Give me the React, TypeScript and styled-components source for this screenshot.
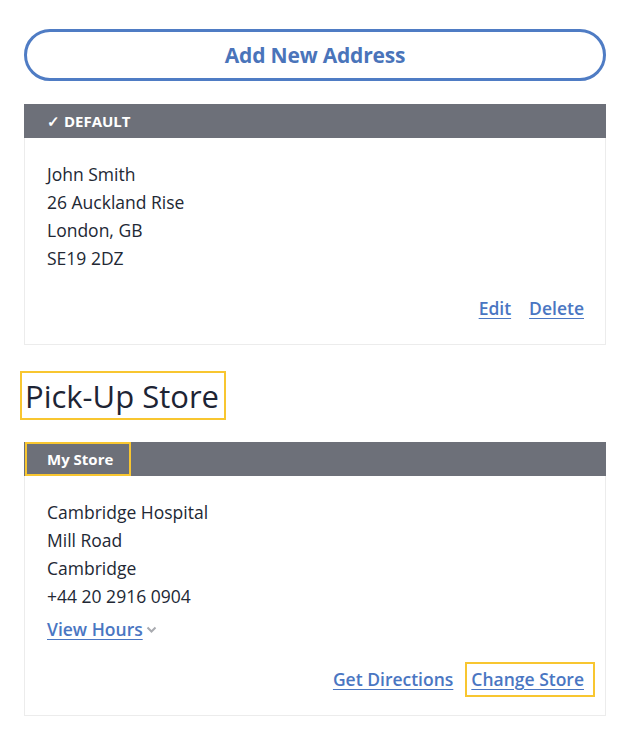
import React from 'react';
import styled, { createGlobalStyle } from 'styled-components';

const GlobalStyle = createGlobalStyle`
  body {
    margin: 0;
    background: #ffffff;
    font-family: 'Open Sans', 'Noto Sans', sans-serif;
    color: #222834;
  }
`;

const Page = styled.div`
  width: 582px;
  padding: 29px 0 30px 24px;
`;

const AddButton = styled.button`
  display: flex;
  align-items: center;
  justify-content: center;
  width: 100%;
  height: 52px;
  border: 3px solid #4f7cc4;
  border-radius: 26px;
  background: #fff;
  color: #4a74ba;
  font-family: 'Open Sans', sans-serif;
  font-size: 21px;
  font-weight: 700;
  letter-spacing: -0.2px;
  cursor: pointer;
  margin-bottom: 23px;
`;

const Card = styled.section`
  border: 1px solid #ececec;
  border-top: none;
`;

const CardHeader = styled.header`
  display: flex;
  align-items: stretch;
  height: 34px;
  background: #6d7079;
  color: #fff;
  font-size: 15px;
  font-weight: 700;
  margin: 0 -1px;
`;

const HeaderLabel = styled.span<{ $focused?: boolean }>`
  display: flex;
  align-items: center;
  padding: 0 ${({ $focused }) => ($focused ? '16px' : '0')} 0 ${({ $focused }) => ($focused ? '20px' : '23px')};
  border: ${({ $focused }) => ($focused ? '2px solid #f8c630' : 'none')};
  margin-left: ${({ $focused }) => ($focused ? '1px' : '0')};
`;

const CardBody = styled.div`
  padding: 22px 21px 22px 22px;
  font-size: 17.5px;
  line-height: 28px;
`;

const Line = styled.div``;

const Actions = styled.div`
  display: flex;
  justify-content: flex-end;
  gap: 18px;
  margin-top: 22px;
`;

const LinkText = styled.a<{ $focused?: boolean }>`
  position: relative;
  color: #4a76c2;
  font-size: 17.5px;
  font-weight: 600;
  text-decoration: underline;
  text-underline-offset: 3px;
  cursor: pointer;

  ${({ $focused }) =>
    $focused &&
    `
    &::after {
      content: '';
      position: absolute;
      left: -6px;
      right: -11px;
      top: -3px;
      bottom: -4px;
      border: 2px solid #f8c630;
    }
  `}
`;

const HoursLink = styled(LinkText)`
  display: inline-flex;
  align-items: center;
  margin-top: 5px;
`;

const Chevron = styled.svg`
  margin-left: 3px;
  margin-top: 2px;
`;

const Heading = styled.h2`
  position: relative;
  display: inline-block;
  margin: 26px 0 22px 1px;
  padding-top: 2px;
  font-size: 31px;
  font-weight: 400;
  line-height: 47px;
  color: #1d2434;

  &::after {
    content: '';
    position: absolute;
    left: -5px;
    right: -7px;
    top: 0;
    bottom: 0;
    border: 2px solid #f8c630;
  }
`;

const App: React.FC = () => {
  return (
    <>
      <GlobalStyle />
      <Page>
        <AddButton>Add New Address</AddButton>

        <Card>
          <CardHeader>
            <HeaderLabel>✓ DEFAULT</HeaderLabel>
          </CardHeader>
          <CardBody>
            <Line>John Smith</Line>
            <Line>26 Auckland Rise</Line>
            <Line>London, GB</Line>
            <Line>SE19 2DZ</Line>
            <Actions>
              <LinkText>Edit</LinkText>
              <LinkText>Delete</LinkText>
            </Actions>
          </CardBody>
        </Card>

        <Heading>Pick-Up Store</Heading>

        <Card>
          <CardHeader>
            <HeaderLabel $focused>My Store</HeaderLabel>
          </CardHeader>
          <CardBody>
            <Line>Cambridge Hospital</Line>
            <Line>Mill Road</Line>
            <Line>Cambridge</Line>
            <Line>+44 20 2916 0904</Line>
            <HoursLink>
              View Hours{' '}
              <Chevron width="11" height="8" viewBox="0 0 11 8">
                <path d="M1.5 1.5 L5.5 5.5 L9.5 1.5" fill="none" stroke="#a9abb0" strokeWidth="2" />
              </Chevron>
            </HoursLink>
            <Actions>
              <LinkText>Get Directions</LinkText>
              <LinkText $focused>Change Store</LinkText>
            </Actions>
          </CardBody>
        </Card>
      </Page>
    </>
  );
};

export default App;
